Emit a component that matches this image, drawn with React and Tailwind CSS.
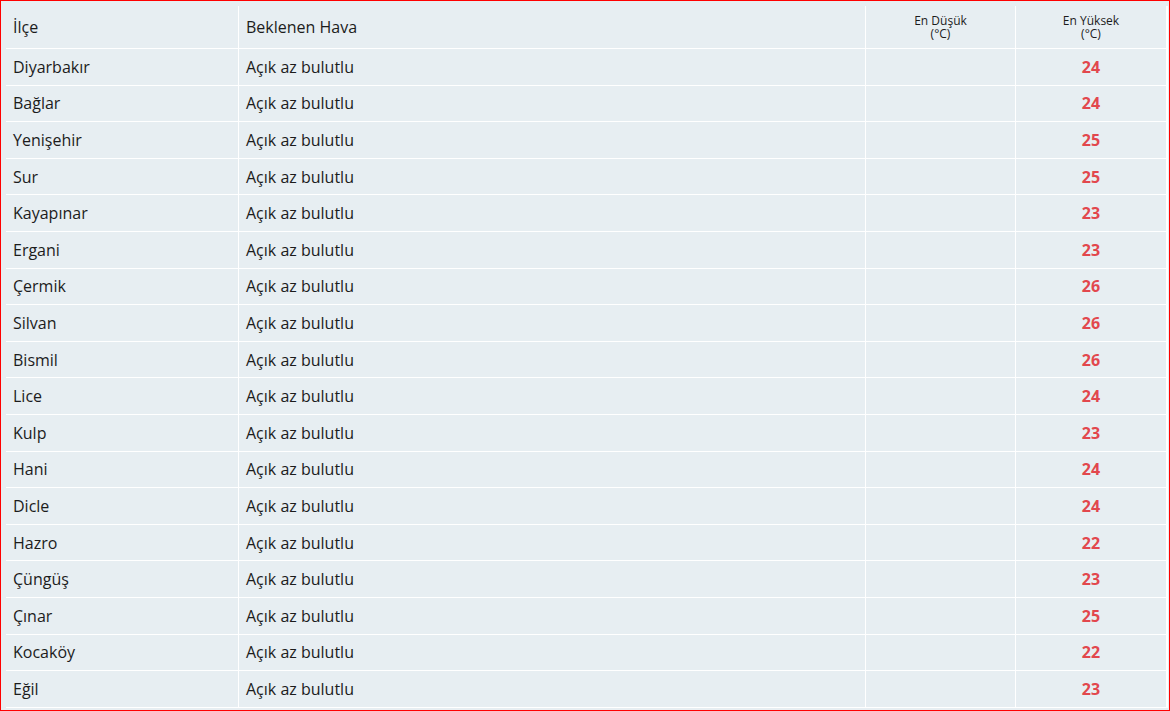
const rows = [
  ["Diyarbakır", 24],
  ["Bağlar", 24],
  ["Yenişehir", 25],
  ["Sur", 25],
  ["Kayapınar", 23],
  ["Ergani", 23],
  ["Çermik", 26],
  ["Silvan", 26],
  ["Bismil", 26],
  ["Lice", 24],
  ["Kulp", 23],
  ["Hani", 24],
  ["Dicle", 24],
  ["Hazro", 22],
  ["Çüngüş", 23],
  ["Çınar", 25],
  ["Kocaköy", 22],
  ["Eğil", 23],
];

export default function App() {
  return (
    <div
      className="w-[1170px] h-[711px] border border-[#ff0000] bg-[#e7eef2] pl-[5px] pt-[5px] overflow-hidden text-[#1c1c1c]"
      style={{ fontFamily: '"Open Sans", "Noto Sans", sans-serif' }}
    >
      <div className="w-[1162px]">
        {/* Header */}
        <div className="grid grid-cols-[233px_627px_150px_152px] h-[43px] border-b border-white">
          <div className="border-r border-white flex items-center pl-[7px] text-[16px]">İlçe</div>
          <div className="border-r border-white flex items-center pl-[7px] text-[16px]">Beklenen Hava</div>
          <div className="border-r border-white flex items-center justify-center text-center text-[12px] leading-[13px]">
            <span>
              En Düşük
              <br />
              (°C)
            </span>
          </div>
          <div className="border-r-2 border-white flex items-center justify-center text-center text-[12px] leading-[13px]">
            <span>
              En Yüksek
              <br />
              (°C)
            </span>
          </div>
        </div>

        {/* Rows */}
        {rows.map(([name, max]) => (
          <div
            key={name}
            className="grid grid-cols-[233px_627px_150px_152px] h-[36.6px] border-b border-white text-[16px]"
          >
            <div className="border-r border-white flex items-center pl-[7px]">{name}</div>
            <div className="border-r border-white flex items-center pl-[7px]">Açık az bulutlu</div>
            <div className="border-r border-white"></div>
            <div className="border-r-2 border-white flex items-center justify-center font-bold text-[#e2474d]">
              {max}
            </div>
          </div>
        ))}
      </div>
    </div>
  );
}
